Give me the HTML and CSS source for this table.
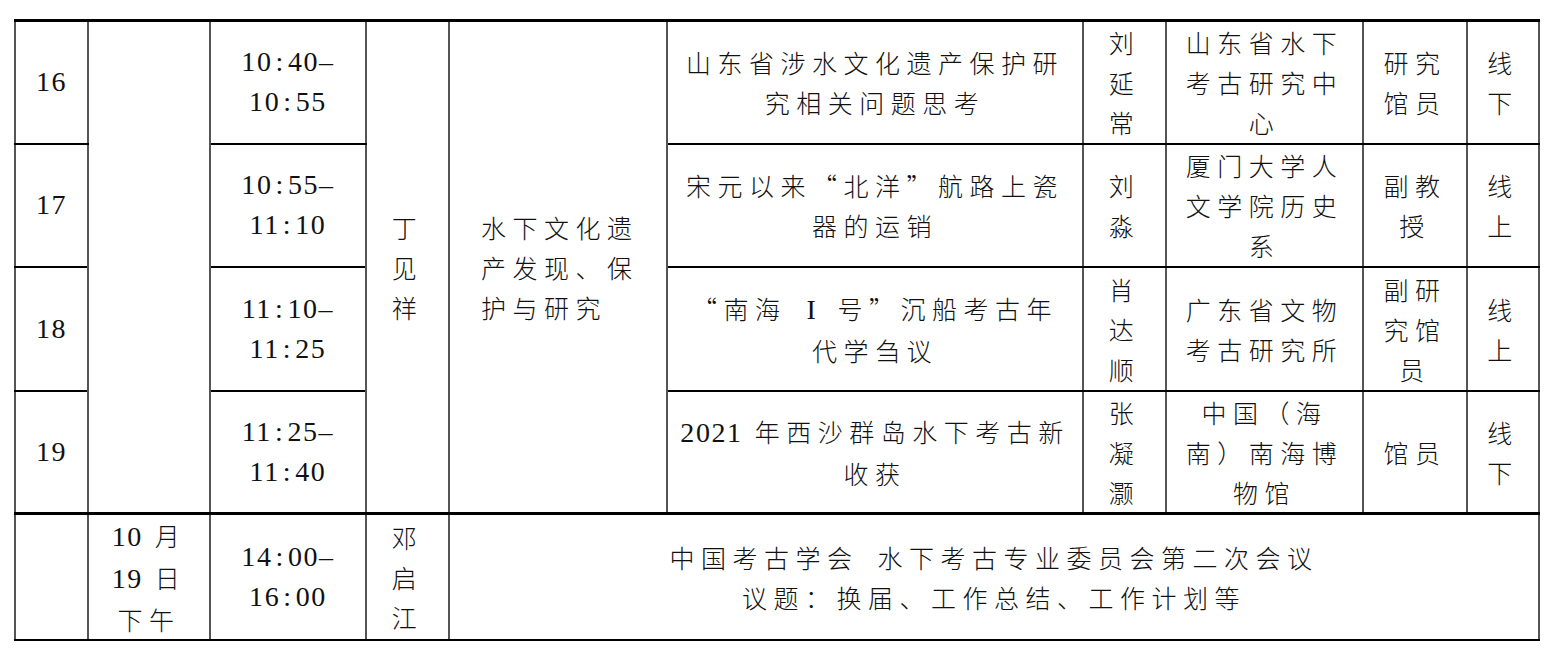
FILE: index.html
```html
<!DOCTYPE html>
<html lang="zh-CN">
<head>
<meta charset="utf-8">
<title>日程</title>
<link rel="stylesheet" href="styles.css">
</head>
<body>
<table class="sched">
  <colgroup>
    <col class="w-no"><col class="w-date"><col class="w-time"><col class="w-host"><col class="w-topic">
    <col class="w-title"><col class="w-name"><col class="w-org"><col class="w-rank"><col class="w-mode">
  </colgroup>
  <tr class="row-a">
    <td class="num">16</td>
    <td rowspan="4"></td>
    <td class="num">10<span class="colon">:</span>40–<br>10<span class="colon">:</span>55</td>
    <td rowspan="4">丁<br>见<br>祥</td>
    <td rowspan="4" class="topic">水下文化遗<br>产发现、保<br>护与研究</td>
    <td>山东省涉水文化遗产保护研<br>究相关问题思考</td>
    <td>刘<br>延<br>常</td>
    <td>山东省水下<br>考古研究中<br>心</td>
    <td>研究<br>馆员</td>
    <td>线<br>下</td>
  </tr>
  <tr class="row-b">
    <td class="num">17</td>
    <td class="num">10<span class="colon">:</span>55–<br>11<span class="colon">:</span>10</td>
    <td>宋元以来“北洋”航路上瓷<br>器的运销</td>
    <td>刘<br>淼</td>
    <td>厦门大学人<br>文学院历史<br>系</td>
    <td>副教<br>授</td>
    <td>线<br>上</td>
  </tr>
  <tr class="row-c">
    <td class="num">18</td>
    <td class="num">11<span class="colon">:</span>10–<br>11<span class="colon">:</span>25</td>
    <td>“南海 <span class="d roman">I</span> 号”沉船考古年<br>代学刍议</td>
    <td>肖<br>达<br>顺</td>
    <td>广东省文物<br>考古研究所</td>
    <td>副研<br>究馆<br>员</td>
    <td>线<br>上</td>
  </tr>
  <tr class="row-b">
    <td class="num">19</td>
    <td class="num">11<span class="colon">:</span>25–<br>11<span class="colon">:</span>40</td>
    <td><span class="d">2021</span> 年西沙群岛水下考古新<br>收获</td>
    <td>张<br>凝<br>灏</td>
    <td>中国（海<br>南）南海博<br>物馆</td>
    <td>馆员</td>
    <td>线<br>下</td>
  </tr>
  <tr class="row-last">
    <td></td>
    <td><span class="d">10</span> 月<br><span class="d">19</span> 日<br>下午</td>
    <td class="num">14<span class="colon">:</span>00–<br>16<span class="colon">:</span>00</td>
    <td>邓<br>启<br>江</td>
    <td colspan="6">中国考古学会&ensp;水下考古专业委员会第二次会议<br>议题：换届、工作总结、工作计划等</td>
  </tr>
</table>
</body>
</html>
```
FILE: styles.css
```css
html, body {
  margin: 0;
  padding: 0;
  background: #ffffff;
}

.sched {
  border-collapse: collapse;
  table-layout: fixed;
  width: 1524px;
  margin: 19px 0 0 14px;
  border-top: 3px solid #000;
  border-bottom: 2px solid #000;
  color: #111;
}

.w-no { width: 73px; }
.w-date { width: 122px; }
.w-time { width: 156px; }
.w-host { width: 83px; }
.w-topic { width: 218px; }
.w-title { width: 416px; }
.w-name { width: 83px; }
.w-org { width: 197px; }
.w-rank { width: 104px; }
.w-mode { width: 72px; }

.row-a { height: 123px; }
.row-b { height: 123px; }
.row-c { height: 124px; }
.row-last { height: 116px; }

.sched td {
  border-left: 2px solid #555;
  border-right: 2px solid #555;
  border-top: 2px solid #000;
  border-bottom: 2px solid #000;
  padding: 0;
  text-align: center;
  vertical-align: middle;
  font-family: "Noto Sans CJK SC", sans-serif;
  font-weight: 300;
  font-size: 25px;
  letter-spacing: 6.5px;
  line-height: 40px;
}

.row-last td {
  border-top: 3px solid #000;
}

.sched td.num,
.d {
  font-family: "Liberation Serif", serif;
  font-weight: 400;
  font-size: 28px;
  letter-spacing: 1.6px;
}

.colon {
  padding: 0 3px;
}

.roman {
  padding: 0 8px;
}

.sched td.topic {
  text-align: left;
  padding-left: 31px;
}
```
